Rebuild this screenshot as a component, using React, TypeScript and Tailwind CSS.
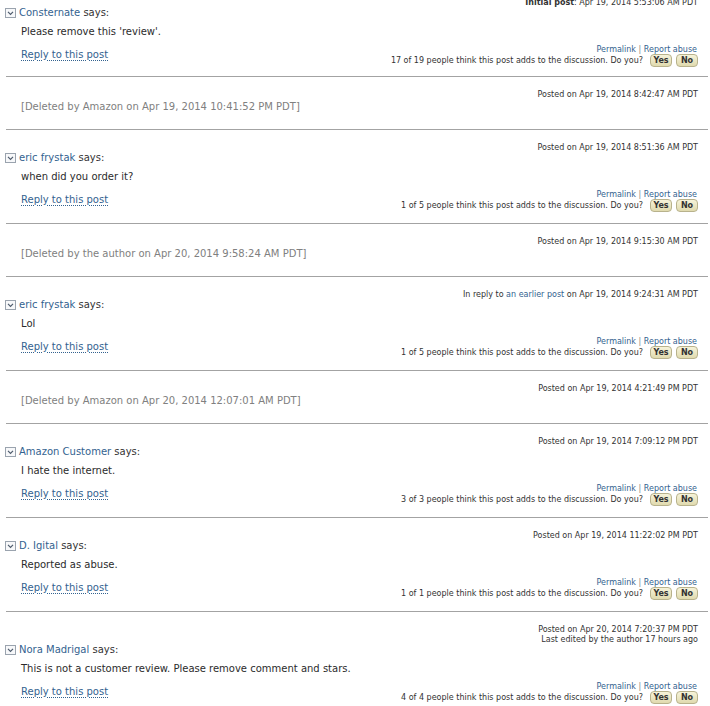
import React from 'react';

type Entry =
  | { kind: 'deleted'; posted: string; note: string }
  | {
      kind: 'post';
      header: React.ReactNode[];
      author: string;
      body: string;
      votes: string;
    };

const entries: Entry[] = [
  {
    kind: 'post',
    header: [
      <>
        <span className="font-bold">Initial post</span>: Apr 19, 2014 5:53:06 AM PDT
      </>,
    ],
    author: 'Consternate',
    body: "Please remove this 'review'.",
    votes: '17 of 19',
  },
  {
    kind: 'deleted',
    posted: 'Posted on Apr 19, 2014 8:42:47 AM PDT',
    note: '[Deleted by Amazon on Apr 19, 2014 10:41:52 PM PDT]',
  },
  {
    kind: 'post',
    header: ['Posted on Apr 19, 2014 8:51:36 AM PDT'],
    author: 'eric frystak',
    body: 'when did you order it?',
    votes: '1 of 5',
  },
  {
    kind: 'deleted',
    posted: 'Posted on Apr 19, 2014 9:15:30 AM PDT',
    note: '[Deleted by the author on Apr 20, 2014 9:58:24 AM PDT]',
  },
  {
    kind: 'post',
    header: [
      <>
        In reply to <a className="text-[#33628f]">an earlier post</a> on Apr 19, 2014 9:24:31 AM PDT
      </>,
    ],
    author: 'eric frystak',
    body: 'Lol',
    votes: '1 of 5',
  },
  {
    kind: 'deleted',
    posted: 'Posted on Apr 19, 2014 4:21:49 PM PDT',
    note: '[Deleted by Amazon on Apr 20, 2014 12:07:01 AM PDT]',
  },
  {
    kind: 'post',
    header: ['Posted on Apr 19, 2014 7:09:12 PM PDT'],
    author: 'Amazon Customer',
    body: 'I hate the internet.',
    votes: '3 of 3',
  },
  {
    kind: 'post',
    header: ['Posted on Apr 19, 2014 11:22:02 PM PDT'],
    author: 'D. Igital',
    body: 'Reported as abuse.',
    votes: '1 of 1',
  },
  {
    kind: 'post',
    header: ['Posted on Apr 20, 2014 7:20:37 PM PDT', 'Last edited by the author 17 hours ago'],
    author: 'Nora Madrigal',
    body: 'This is not a customer review. Please remove comment and stars.',
    votes: '4 of 4',
  },
];

const Toggle = () => (
  <svg width="11" height="10" viewBox="0 0 11 10" className="shrink-0">
    <rect x="0.5" y="0.5" width="10" height="9" fill="#f7f8fa" stroke="#9aa3ae" />
    <polyline points="3,3.8 5.5,6.3 8,3.8" fill="none" stroke="#4d5b6c" strokeWidth="1.2" />
  </svg>
);

const VoteButton = ({ label }: { label: string }) => (
  <button className="h-[13px] w-[22px] rounded-[4px] border border-[#b8b28c] bg-gradient-to-b from-[#f6f3da] to-[#e0daae] text-[8px] font-bold leading-[11px] text-[#333]">
    {label}
  </button>
);

const Separator = () => <div className="ml-[6px] mr-[2px] h-px bg-[#a3a3a3]" />;

const PostBlock = ({ entry, first }: { entry: Extract<Entry, { kind: 'post' }>; first?: boolean }) => (
  <div className={first ? 'pb-[10px] pr-[12px] pt-[13px]' : 'pb-[12px] pr-[12px] pt-[13px]'}>
    {entry.header.map((line, i) => (
      <div key={i} className="text-right text-[8px] leading-[10px] text-[#333]">
        {line}
      </div>
    ))}
    <div className="flex h-[10px] items-center gap-[3px] pl-[5px] text-[10px] leading-[10px]">
      <Toggle />
      <span>
        <a className="text-[#33628f]">{entry.author}</a> <span className="text-[#333]">says:</span>
      </span>
    </div>
    <div className="mt-[8px] pl-[21px] text-[10px] leading-[12px] text-[#2b2b2b]">{entry.body}</div>
    <div className="mt-[7px] flex items-start justify-between">
      <a className="ml-[21px] mt-[4px] text-[10px] leading-[12px] text-[#33628f] underline decoration-dotted underline-offset-2">
        Reply to this post
      </a>
      <div className="flex flex-col items-end">
        <div className="pr-px text-[8px] leading-[10px] text-[#33628f]">
          Permalink <span className="text-[#888]">|</span> Report abuse
        </div>
        <div className="flex h-[11px] items-center gap-[4px] text-[8px] text-[#333]">
          <span className="mr-[3px]">{entry.votes} people think this post adds to the discussion. Do you?</span>
          <VoteButton label="Yes" />
          <VoteButton label="No" />
        </div>
      </div>
    </div>
  </div>
);

const DeletedBlock = ({ entry }: { entry: Extract<Entry, { kind: 'deleted' }> }) => (
  <div className="pb-[16px] pr-[12px] pt-[13px]">
    <div className="text-right text-[8px] leading-[10px] text-[#333]">{entry.posted}</div>
    <div className="mt-px pl-[21px] text-[10px] leading-[12px] text-[#808080]">{entry.note}</div>
  </div>
);

export default function App() {
  return (
    <div className="h-[706px] w-[710px] overflow-hidden bg-white font-['DejaVu_Sans',sans-serif]">
      <div className="-mt-[15px]">
        {entries.map((entry, i) => (
          <div key={i}>
            {i > 0 && <Separator />}
            {entry.kind === 'post' ? (
              <PostBlock entry={entry} first={i === 0} />
            ) : (
              <DeletedBlock entry={entry} />
            )}
          </div>
        ))}
      </div>
    </div>
  );
}
